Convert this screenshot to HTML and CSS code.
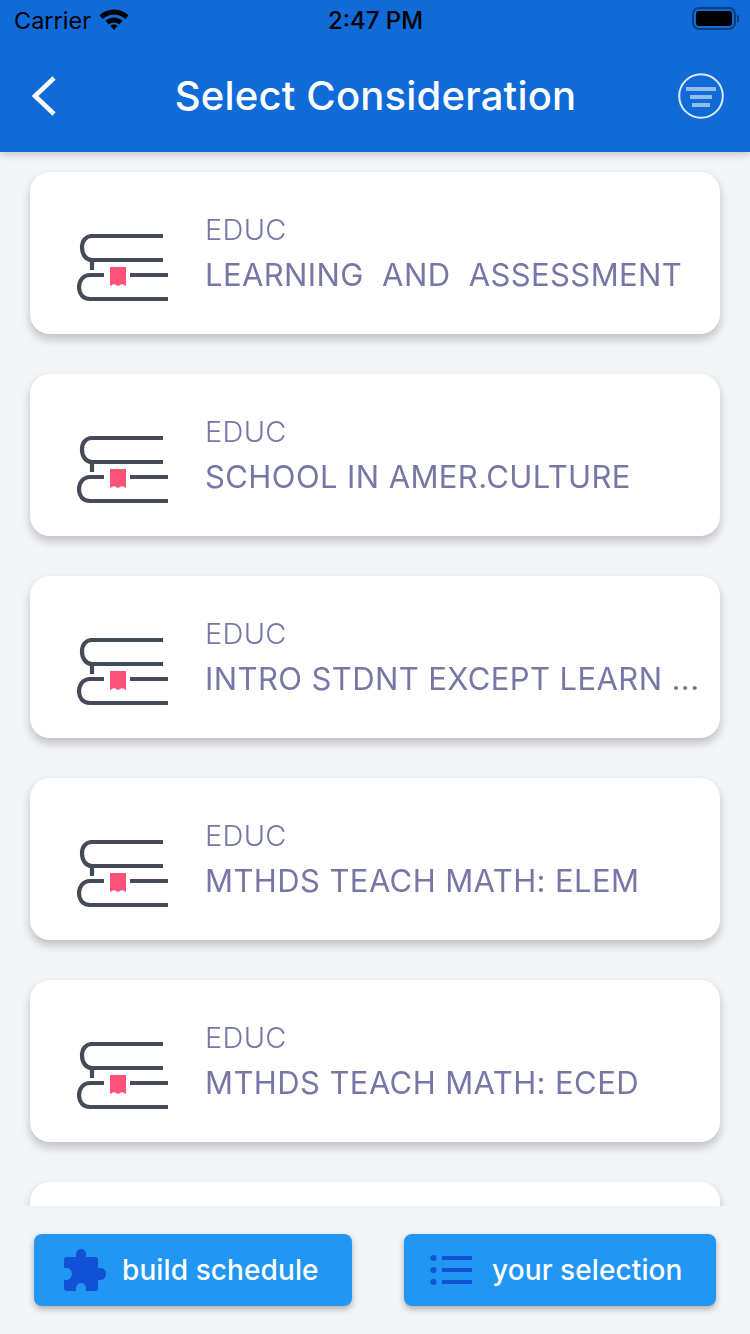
FILE: index.html
```html
<!DOCTYPE html>
<html lang="en">
<head>
<meta charset="utf-8">
<title>Select Consideration</title>
<link rel="stylesheet" href="styles.css">
</head>
<body>
<svg class="defs" width="0" height="0" aria-hidden="true">
  <symbol id="book" viewBox="0 0 92 68">
    <path class="book-line" d="M86 2H15C9 2 5 6.500 5 13.500C5 20.500 9 26 15 26H86M15 26V36M27 41H13C6 41 2 47 2 53C2 60 6 65 13 65H91M53 41H91"/>
    <path class="book-mark" d="M33 33H49V52L45 50L41 52L37 50L33 52Z"/>
  </symbol>
</svg>
<div class="page">
  <header class="header">
    <div class="status">
      <div class="status-left">
        <span class="carrier">Carrier</span>
        <svg class="wifi" viewBox="0 0 30 22"><path d="M15 0.500C20.500 0.500 25.500 2.700 29.500 6.300L26.300 10C23.300 7.300 19.300 5.500 15 5.500C10.700 5.500 6.700 7.300 3.700 10L0.500 6.300C4.500 2.700 9.500 0.500 15 0.500Z"/><path d="M15 8.500C18.200 8.500 21.200 9.800 23.500 11.800L20.300 15.400C18.900 14.200 17 13.400 15 13.400C13 13.400 11.100 14.200 9.700 15.400L6.500 11.800C8.800 9.800 11.800 8.500 15 8.500Z"/><path d="M15 15.500C16.300 15.500 17.500 16 18.500 16.800L15 21L11.500 16.800C12.500 16 13.700 15.500 15 15.500Z"/></svg>
      </div>
      <span class="time">2:47 PM</span>
      <div class="battery-wrap">
        <div class="battery"><span class="battery-fill"></span></div>
        <span class="battery-nub"></span>
      </div>
    </div>
    <div class="nav">
      <svg class="back" viewBox="0 0 26 40"><path d="M23 2L4 20L23 38"/></svg>
      <h1 class="title">Select Consideration</h1>
      <svg class="filter" viewBox="0 0 46 46">
        <circle class="filter-ring" cx="23" cy="23" r="21.800"/>
        <path class="filter-lines" d="M8 16H38M12 24H34M14 32H32"/>
      </svg>
    </div>
  </header>

  <main class="list">
    <article class="card">
      <svg class="book"><use href="#book"/></svg>
      <div class="info"><p class="dept">EDUC</p><p class="name">LEARNING  AND  ASSESSMENT</p></div>
    </article>
    <article class="card">
      <svg class="book"><use href="#book"/></svg>
      <div class="info"><p class="dept">EDUC</p><p class="name">SCHOOL IN AMER.CULTURE</p></div>
    </article>
    <article class="card">
      <svg class="book"><use href="#book"/></svg>
      <div class="info"><p class="dept">EDUC</p><p class="name">INTRO STDNT EXCEPT LEARN ...</p></div>
    </article>
    <article class="card">
      <svg class="book"><use href="#book"/></svg>
      <div class="info"><p class="dept">EDUC</p><p class="name">MTHDS TEACH MATH: ELEM</p></div>
    </article>
    <article class="card">
      <svg class="book"><use href="#book"/></svg>
      <div class="info"><p class="dept">EDUC</p><p class="name">MTHDS TEACH MATH: ECED</p></div>
    </article>
    <article class="card"></article>
  </main>

  <footer class="footer">
    <button class="action action-build">
      <svg class="puzzle" viewBox="0 0 42 42"><path d="M3 8H12V5A5 5 0 0 1 22 5V8H31A3 3 0 0 1 34 11V19H37A5 6 0 0 1 37 31H34V39A3 3 0 0 1 31 42H22V39A5 5 0 0 0 12 39V42H3A3 3 0 0 1 0 39V31H3A5 6 0 0 0 3 19H0V11A3 3 0 0 1 3 8Z"/></svg>
      <span>build schedule</span>
    </button>
    <button class="action action-list">
      <svg class="listicon" viewBox="0 0 42 30"><circle cx="3.500" cy="3" r="3"/><circle cx="3.500" cy="15" r="3"/><circle cx="3.500" cy="27" r="3"/><path d="M12 1H42V5H12ZM12 13H42V17H12ZM12 25H42V29H12Z"/></svg>
      <span>your selection</span>
    </button>
  </footer>
</div>
</body>
</html>
```

FILE: styles.css
```css
* { box-sizing: border-box; }
html, body { margin: 0; padding: 0; }
body { font-family: Inter, "Liberation Sans", sans-serif; background: #f3f4f6; }
.defs { position: absolute; }
.page { width: 750px; height: 1334px; display: flex; flex-direction: column; overflow: hidden; background: #f3f4f6; }

.header { height: 152px; flex: none; background: #106ad8; box-shadow: 0 2px 8px rgba(0,0,0,.22); position: relative; z-index: 2; }
.status { height: 40px; display: grid; grid-template-columns: 1fr auto 1fr; align-items: center; padding: 2px 11px 0 14px; color: #000; }
.status-left { display: flex; align-items: center; gap: 9px; }
.carrier { font-size: 23.500px; line-height: 38px; }
.wifi { width: 30px; height: 22px; fill: #000; margin-top: -2px; margin-left: -1px; }
.time { font-size: 24px; font-weight: 500; line-height: 38px; margin-left: -2px; }
.battery-wrap { display: flex; align-items: center; justify-content: flex-end; gap: 1px; margin-top: -5px; }
.battery { width: 44px; height: 23px; border: 2px solid rgba(0,0,0,.4); border-radius: 7px; padding: 2px; }
.battery-fill { display: block; height: 100%; background: #000; border-radius: 3px; }
.battery-nub { width: 2px; height: 8px; background: rgba(0,0,0,.4); border-radius: 0 2px 2px 0; }

.nav { height: 112px; display: flex; align-items: center; justify-content: space-between; padding: 0 26px 0 31px; }
.back { width: 26px; height: 40px; fill: none; stroke: #fff; stroke-width: 4.500; }
.title { margin: 0 0 0 16px; font-size: 40px; font-weight: 500; line-height: 48px; letter-spacing: .2px; color: #fff; }
.filter { width: 46px; height: 46px; fill: none; }
.filter-ring { stroke: #fff; stroke-opacity: .85; stroke-width: 2; }
.filter-lines { stroke: #fff; stroke-opacity: .55; stroke-width: 4; }

.list { flex: 1; min-height: 0; overflow: hidden; padding: 20px 30px 0; display: flex; flex-direction: column; gap: 40px; }
.card { flex: none; height: 162px; background: #fff; border-radius: 20px; box-shadow: 0 5px 10px rgba(0,0,0,.22); display: flex; align-items: flex-start; padding: 41px 0 0 47px; }
.book { width: 92px; height: 68px; flex: none; margin-top: 21px; }
.book-line { fill: none; stroke: #444a57; stroke-width: 4.200; }
.book-mark { fill: #fe5278; }
.info { margin-left: 36px; min-width: 0; will-change: opacity; }
.dept, .name { margin: 0; color: #7777a6; white-space: pre; }
.dept { font-size: 29px; font-weight: 300; line-height: 34px; letter-spacing: .3px; }
.name { font-size: 31px; font-weight: 400; line-height: 40px; letter-spacing: .4px; margin-top: 8px; }

.footer { height: 128px; flex: none; background: #f3f4f6; display: flex; align-items: flex-start; padding: 28px 34px 0; justify-content: space-between; position: relative; z-index: 1; }
.action { height: 72px; border: 0; border-radius: 8px; background: #2196f3; box-shadow: 0 3px 6px rgba(0,0,0,.3); color: #fff; font-family: inherit; font-size: 28px; font-weight: 500; letter-spacing: .1px; display: flex; align-items: center; padding: 0; }
.action-build { width: 318px; padding-left: 30px; gap: 16px; }
.action-list { width: 312px; padding-left: 26px; gap: 20px; }
.puzzle { width: 42px; height: 42px; fill: #1151d3; flex: none; }
.listicon { width: 42px; height: 30px; fill: #1151d3; flex: none; }
```
